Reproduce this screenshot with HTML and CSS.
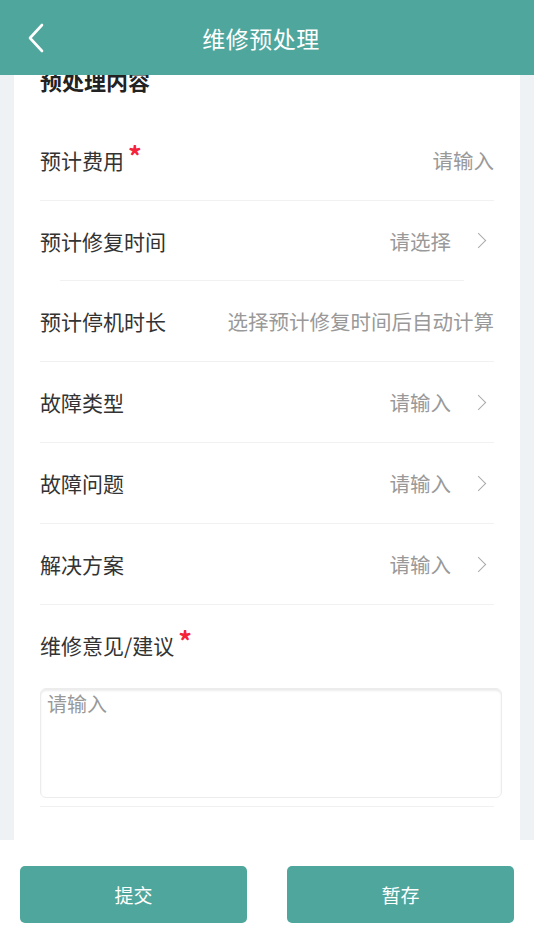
FILE: index.html
```html
<!DOCTYPE html>
<html lang="zh-CN">
<head>
    <meta charset="UTF-8">
    <meta name="viewport" content="width=device-width, initial-scale=1.0">
    <title>维修预处理</title>
    <link rel="stylesheet" href="styles.css">
</head>
<body>
    <div class="header">
        <div class="back">
            <svg width="18" height="30" viewBox="0 0 18 30">
                <polyline points="15,2 3,15 15,28" fill="none" stroke="#fff" stroke-width="2.6" stroke-linecap="round" stroke-linejoin="round"/>
            </svg>
        </div>
        <div class="title">维修预处理</div>
    </div>

    <div class="main">
        <div class="card">
            <div class="card-title">预处理内容</div>

            <div class="row">
                <div class="label">预计费用<span class="req">*</span></div>
                <div class="value">请输入</div>
            </div>
            <div class="row short no-line">
                <div class="label">预计修复时间</div>
                <div class="value">请选择<span class="arrow"></span></div>
            </div>
            <div class="divider-inset"></div>
            <div class="row">
                <div class="label">预计停机时长</div>
                <div class="value">选择预计修复时间后自动计算</div>
            </div>
            <div class="row">
                <div class="label">故障类型</div>
                <div class="value">请输入<span class="arrow"></span></div>
            </div>
            <div class="row">
                <div class="label">故障问题</div>
                <div class="value">请输入<span class="arrow"></span></div>
            </div>
            <div class="row">
                <div class="label">解决方案</div>
                <div class="value">请输入<span class="arrow"></span></div>
            </div>
            <div class="row no-line">
                <div class="label">维修意见/建议<span class="req">*</span></div>
            </div>
            <textarea class="opinion" placeholder="请输入"></textarea>
            <div class="divider"></div>
        </div>
    </div>

    <div class="footer">
        <button class="btn">提交</button>
        <button class="btn">暂存</button>
    </div>
</body>
</html>
```

FILE: styles.css
```css
body {
    margin: 0;
    padding: 0;
    height: 950px;
    overflow: hidden;
    background-color: #eef2f5;
    font-family: "Noto Sans CJK SC", "Noto Sans", sans-serif;
    color: #333;
}
.header {
    height: 75px;
    background-color: #4fa69d;
    display: flex;
    align-items: center;
    justify-content: center;
    position: relative;
    z-index: 2;
}
.back {
    position: absolute;
    left: 27px;
    top: 23px;
    height: 30px;
}
.title {
    color: #fff;
    font-size: 23px;
    letter-spacing: 0.5px;
    margin-right: 12px;
}
.main {
    height: 765px;
    overflow: hidden;
}
.card {
    margin: -30px 14px 0;
    padding: 20px 26px 34px;
    background-color: #fff;
}
.card-title {
    font-size: 22px;
    font-weight: bold;
    line-height: 30px;
    margin-bottom: 25px;
    color: #222;
}
.row {
    height: 80px;
    display: flex;
    align-items: center;
    justify-content: space-between;
    border-bottom: 1px solid #f1f1f1;
}
.row.short {
    height: 79px;
}
.row.no-line {
    border-bottom: none;
}
.divider-inset {
    height: 1px;
    margin: 0 30px 0 20px;
    background-color: #f1f1f1;
}
.label {
    font-size: 21px;
    color: #333;
    display: flex;
    align-items: flex-start;
}
.req {
    color: #f5223a;
    font-size: 27px;
    font-weight: bold;
    line-height: 1;
    margin-left: 4px;
    margin-top: -3px;
}
.value {
    font-size: 20.5px;
    color: #999;
    display: flex;
    align-items: center;
}
.arrow {
    display: inline-block;
    width: 10px;
    height: 10px;
    border-top: 1.6px solid #aaa;
    border-right: 1.6px solid #aaa;
    transform: rotate(45deg);
    margin-left: 22px;
    margin-right: 10px;
}
.opinion {
    display: block;
    box-sizing: border-box;
    width: 462px;
    height: 110px;
    margin-top: 3px;
    padding: 0 6px;
    border: 1px solid #ececec;
    border-radius: 6px;
    box-shadow: inset 0 2px 2px rgba(0, 0, 0, 0.08);
    font-family: "Noto Sans CJK SC", "Noto Sans", sans-serif;
    font-size: 20px;
    color: #333;
    resize: none;
    outline: none;
}
.opinion::placeholder {
    color: #999;
}
.divider {
    height: 1px;
    margin-top: 8px;
    background-color: #f1f1f1;
}
.footer {
    height: 110px;
    box-sizing: border-box;
    padding: 26px 20px 0;
    background-color: #fff;
    display: flex;
    gap: 40px;
}
.btn {
    flex: 1;
    height: 57px;
    border: none;
    border-radius: 5px;
    background-color: #4fa69d;
    color: #fff;
    font-family: "Noto Sans CJK SC", "Noto Sans", sans-serif;
    font-size: 19px;
    cursor: pointer;
}
```
